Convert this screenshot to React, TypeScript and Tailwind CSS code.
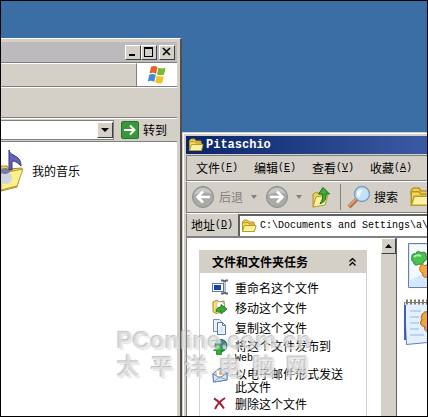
import type { ReactNode } from 'react';

const UI_FONT = "font-['Noto_Sans_CJK_SC',sans-serif]";
const MONO_FONT = "font-['Liberation_Mono',monospace]";

const MENUS = [
  { label: '文件', letter: 'F' },
  { label: '编辑', letter: 'E' },
  { label: '查看', letter: 'V' },
  { label: '收藏', letter: 'A' },
];

const TASKS = [
  { icon: <RenameIcon />, lines: ['重命名这个文件'] },
  { icon: <MoveIcon />, lines: ['移动这个文件'] },
  { icon: <CopyIcon />, lines: ['复制这个文件'] },
  { icon: <PublishIcon />, lines: ['将这个文件发布到', 'Web'] },
  { icon: <MailIcon />, lines: ['以电子邮件形式发送', '此文件'] },
  { icon: <DeleteIcon />, lines: ['删除这个文件'] },
];

function FolderIcon({ className }: { className: string }) {
  return (
    <svg className={className} viewBox="0 0 16 16" aria-hidden="true">
      <path d="M1.5 3.5 3 2h3.500l1.500 2H13v2.500H1.500Z" fill="#f0d050" stroke="#b8952a" />
      <path d="M1.500 13V4.500h5L8 6h5.500v7Z" fill="#f3d65a" stroke="#b8952a" />
      <path d="M1.500 13.500 3.500 7.500h11.500l-1.500 6Z" fill="#fdf3a0" stroke="#b99a2b" />
    </svg>
  );
}

function RenameIcon() {
  return (
    <svg className="h-4 w-4" viewBox="0 0 16 16" aria-hidden="true">
      <rect x=".5" y="4.500" width="11" height="8" fill="#fff" stroke="#5a7fb5" />
      <rect x="2" y="6" width="7" height="5" fill="#1643a8" />
      <path d="M9 1.500h2l1.500 1 1.500-1h2M12.500 2v12M9 14.500h2l1.500-1 1.500 1h2" fill="none" stroke="#5a6478" strokeWidth="2" />
      <path d="M12.500 3v10" stroke="#c6d0dd" />
    </svg>
  );
}

function MoveIcon() {
  return (
    <svg className="h-4 w-4" viewBox="0 0 16 16" aria-hidden="true">
      <path d="M1 3 5 1l2 2 5-1 1 10-9 2.500-3-2Z" fill="#f4df6c" stroke="#a38a28" />
      <path d="M5 3h5l2 2v6H5Z" fill="#fff" stroke="#b1b5bb" strokeWidth=".6" />
      <path d="M4 12.500c0-3 2-4.500 5-4.500V5.500l6 4.500-6 5v-2.500c-2 0-3.500-.5-5 0Z" fill="#39a936" stroke="#17661d" strokeWidth=".8" />
    </svg>
  );
}

function CopyIcon() {
  return (
    <svg className="h-4 w-4" viewBox="0 0 16 16" aria-hidden="true">
      <path d="M1.500.5h6l2 2v10h-8Z" fill="#e8f1fc" stroke="#7591b5" />
      <path d="M5.500 3.500h5l3 3v9h-8Z" fill="#f4f9ff" stroke="#59779f" />
      <path d="M10.500 3.500v3h3" fill="none" stroke="#59779f" />
      <path d="M7.500 9h4M7.500 11h4M7.500 13h4" fill="none" stroke="#b8cfec" />
    </svg>
  );
}

function PublishIcon() {
  return (
    <svg className="h-4 w-4" viewBox="0 0 16 16" aria-hidden="true">
      <circle cx="9" cy="6.500" r="6" fill="#3c7f9f" stroke="#28576f" />
      <path d="M5 2c3-2 5-1 4 2S5 6 4 8 3 4 5 2ZM11 5l3-1v4l-3 2Z" fill="#58b45c" />
      <path d="m7 6.500 5.500 5h-3v4h-5v-4h-3Z" fill="#27b332" stroke="#176d20" strokeWidth=".7" />
    </svg>
  );
}

function MailIcon() {
  return (
    <svg className="h-4 w-4" viewBox="0 0 16 16" aria-hidden="true">
      <path d="M1 6.500 8 1l7 5v7l-13.500 2Z" fill="#cbdcef" stroke="#6485ae" />
      <path d="m4 3 8 .5-.5 6-7 .5Z" fill="#fff" stroke="#98a3af" strokeWidth=".6" />
      <circle cx="9" cy="6" r="2" fill="#eda34e" />
      <path d="m1 6.500 6.500 4.500L15 6v7l-13.500 2Z" fill="#dceaf8" stroke="#6485ae" />
      <path d="m1.500 15 6-5 7.500 3" fill="none" stroke="#83a2c6" />
    </svg>
  );
}

function DeleteIcon() {
  return (
    <svg className="h-4 w-4" viewBox="0 0 16 16" aria-hidden="true">
      <path d="M2 3.500c4 2 7 5.500 10 10M13 3C9 5.500 5 9.500 3 14" fill="none" stroke="#a51c3b" strokeWidth="2" />
    </svg>
  );
}

function RoundArrow({ flip = false }: { flip?: boolean }) {
  return (
    <svg className="h-6 w-6 shrink-0" viewBox="0 0 24 24" aria-hidden="true">
      <circle cx="12" cy="12" r="10.500" fill="#a9a9a7" stroke="#8c8c8a" />
      <path d="M3 10a9.500 9.500 0 0 1 18-1c-5-2-12-2-18 1Z" fill="#c6c6c4" />
      <path
        d={flip ? 'M5 12h12M12 6.500l5.500 5.500-5.500 5.500' : 'M19 12H7M12 6.500 6.500 12l5.500 5.500'}
        fill="none"
        stroke="#fff"
        strokeWidth="2.600"
      />
    </svg>
  );
}

function UpFolderIcon() {
  return (
    <svg className="h-6 w-5 shrink-0" viewBox="0 0 20 24" aria-hidden="true">
      <path d="M2 9 6 7l2 2 6-1v11L2 22Z" fill="#ecd25a" stroke="#a98e2c" />
      <path d="m2 22 3-10 12-2-3 10Z" fill="#fbf2a0" stroke="#b59b35" />
      <path d="M12 2.500 18.500 9l-3.500-.2c.5 6-2 9-6 9.700 2.500-3 3-6 2.500-9.500L7.500 9Z" fill="#3bb035" stroke="#176b1b" />
    </svg>
  );
}

function SearchIcon() {
  return (
    <svg className="h-6 w-6 shrink-0" viewBox="0 0 24 24" aria-hidden="true">
      <path d="m10 14-8 8" stroke="#b9713e" strokeWidth="4" />
      <path d="m10 13-8 8" stroke="#e7ab7b" strokeWidth="1.500" />
      <circle cx="15" cy="9" r="7.500" fill="#c3e2f8" stroke="#7e9fc4" strokeWidth="1.500" />
      <path d="M10 9c0-3 3-5 6-4-2 1-3 4-3 7-2 0-3-1-3-3Z" fill="#f4fbff" />
    </svg>
  );
}

function WindowsFlag() {
  return (
    <svg className="h-5 w-5" viewBox="0 0 20 20" aria-hidden="true">
      <path d="M4 2c2-1.500 4-1.500 6.500 0L9 9C7 7.500 5 7.500 2.500 8.500Z" fill="#e8602c" />
      <path d="M11.500 2.500c2.500 1.500 4.500 1.200 7 .3L17 9.500c-2.500 1-4.500 1-7-.3Z" fill="#76b82e" />
      <path d="M2.300 9.800C4.500 8.600 6.500 8.800 8.800 10l-1.600 7C5 15.500 3 15.500.8 16.500Z" fill="#4389dc" />
      <path d="M9.800 10.500c2.400 1.300 4.500 1.300 7 .4L15.200 18c-2.500.9-4.500.6-7-.7Z" fill="#f4c321" />
    </svg>
  );
}

function MusicFolder() {
  return (
    <svg className="h-11 w-6 shrink-0" viewBox="0 0 24 44" aria-hidden="true">
      <path d="M0 17h6l2 3 13-1-5 19-16 4Z" fill="#eed65b" stroke="#a68b2a" />
      <path d="M0 24 12 22l10-2-6 17-16 4Z" fill="#fbf08a" stroke="#b59b35" />
      <ellipse cx="5" cy="29" rx="6" ry="6" fill="#cfd3e4" />
      <ellipse cx="4" cy="22" rx="5" ry="3" fill="#777ba8" />
      <path d="M8 1c1 4 3 4 6 6 4 2 6 5 6 10-3-3-5-5-9-5v9H8Z" fill="#6264b5" stroke="#343775" />
    </svg>
  );
}

function PictureFile() {
  return (
    <svg className="h-12 w-12 shrink-0" viewBox="0 0 48 48" aria-hidden="true">
      <path d="M6.500 1.500h40v44h-40Z" fill="#d6e8fd" stroke="#6c7fa8" />
      <path d="M8 3h38v16L8 38Z" fill="#f4faff" />
      <path d="M10 15c-1-3 3-4 4-3 0-3 4-3 5-1 3-2 6 0 5 3 2 2 0 5-2 5 0 3-3 4-5 3-2 2-6 1-5-2-2 0-3-3-2-5Z" fill="#4cc14c" stroke="#23802b" />
      <path d="M12 15c2-2 5-2 7-1" fill="none" stroke="#b0efaa" strokeWidth="2" />
      <path d="M18 25c1-3 3-3 5-1 2-3 6-2 6 1l3 10c-3 3-6 2-7 0-3 1-5-1-4-4-3 0-4-4-3-6Z" fill="#f6a93b" stroke="#b8711a" />
    </svg>
  );
}

function NotepadFile() {
  return (
    <svg className="h-12 w-12 shrink-0" viewBox="0 0 48 48" aria-hidden="true">
      <path d="M2.500 4.500h44v38l-42 4Z" fill="#e4f0fe" stroke="#5f7fb5" />
      <path d="M3 7v35" stroke="#3f63a6" strokeWidth="2" />
      <path d="M8 13h11M8 19h9M8 25h9M8 31h9M8 37h14" stroke="#8fb9e8" />
      <path d="M4 4h42" stroke="#8d7c58" strokeWidth="5" strokeDasharray="2 2" />
      <path d="M20 17c2-4 5-4 7-2l8 10-8 8c-4 1-5-2-4-4-4-1-6-4-3-7-1-2-1-3 0-5Z" fill="#f2a637" stroke="#8a5a17" />
    </svg>
  );
}

function CaptionButton({ label, className = '', children }: { label: string; className?: string; children: ReactNode }) {
  return (
    <button
      aria-label={label}
      className={`flex h-[15px] w-4 items-center justify-center border border-t-white border-r-[#404040] border-b-[#404040] border-l-white bg-[#d4d0c8] ${className}`}
    >
      <svg className="h-[10px] w-[10px]" viewBox="0 0 10 10" fill="none" stroke="#000" shapeRendering="crispEdges" aria-hidden="true">
        {children}
      </svg>
    </button>
  );
}

function MusicWindow() {
  return (
    <section className="absolute top-[37px] -bottom-4 left-0 flex w-[181px] flex-col border-t border-r-2 border-t-white border-r-[#505050] bg-[#d4d0c8] pt-[3px] pr-[3px]">
      <div className="flex h-5 items-center justify-end bg-[#bdbabd] pr-0.5">
        <CaptionButton label="最小化">
          <path d="M1 8h6" strokeWidth="2" />
        </CaptionButton>
        <CaptionButton label="最大化">
          <path d="M.5 1v8.500h8V1M0 1h9" />
          <path d="M0 1h9" strokeWidth="2" />
        </CaptionButton>
        <CaptionButton label="关闭" className="ml-0.5">
          <path d="m1 1 7 7M8 1 1 8" strokeWidth="1.600" shapeRendering="auto" />
        </CaptionButton>
      </div>
      <div className="flex h-[25px] border-t border-b border-t-[#808080] border-b-[#808080]">
        <div className="flex-1 border-t border-r border-t-white border-r-[#808080]" />
        <div className="flex w-10 items-center justify-center bg-white">
          <WindowsFlag />
        </div>
      </div>
      <div className="h-[31px] border-t border-b border-t-white border-b-[#808080]" />
      <div className="flex h-6 items-center border-t border-b border-t-white border-b-[#808080]">
        <div className="flex h-5 flex-1 items-center border border-l-0 border-[#808080] bg-white">
          <input aria-label="地址" className="h-full w-0 flex-1 outline-none" />
          <button aria-label="展开" className="flex h-4 w-4 items-center justify-center border border-t-white border-r-[#404040] border-b-[#404040] border-l-white bg-[#d4d0c8]">
            <svg className="h-1 w-2" viewBox="0 0 8 4" aria-hidden="true">
              <path d="M0 0h8L4 4Z" />
            </svg>
          </button>
        </div>
        <button className="ml-[7px] flex w-14 items-center gap-1 whitespace-nowrap">
          <svg className="h-[18px] w-[18px]" viewBox="0 0 18 18" aria-hidden="true">
            <rect x=".5" y=".5" width="17" height="17" rx="1.500" fill="#36983a" stroke="#25752a" />
            <path d="M3 9h10M9 4.500 13.500 9 9 13.500" fill="none" stroke="#fff" strokeWidth="2" />
          </svg>
          转到
        </button>
      </div>
      <div className="flex-1 bg-white pt-[7px]">
        <button className="flex items-center gap-[7px] text-left">
          <MusicFolder />
          我的音乐
        </button>
      </div>
    </section>
  );
}

function TaskPane() {
  return (
    <aside className="mt-3 mr-[14px] ml-3 flex-1 self-stretch border-x border-[#d4d0c8]">
      <button className="flex h-[23px] w-full items-center justify-between bg-[#d4d0c8] pr-[10px] pl-3 font-bold">
        文件和文件夹任务
        <svg className="h-2 w-[7px]" viewBox="0 0 7 8" fill="none" stroke="#000" strokeWidth="1.300" aria-hidden="true">
          <path d="m.5 3.500 3-3 3 3M.5 7.500l3-3 3 3" />
        </svg>
      </button>
      <ul className="pt-1 pl-3">
        {TASKS.map(({ icon, lines }) => (
          <li key={lines[0]}>
            <a href="#" className={`flex gap-[7px] leading-[13px] ${lines.length > 1 ? 'h-7 items-start pt-0.5' : 'h-5 items-center'}`}>
              <span className="shrink-0">{icon}</span>
              <span className="whitespace-nowrap">
                {lines.map((line) => (
                  <span key={line} className={`block h-[13px] ${line === 'Web' ? `${MONO_FONT} text-[10px]` : ''}`}>
                    {line}
                  </span>
                ))}
              </span>
            </a>
          </li>
        ))}
      </ul>
    </aside>
  );
}

function ExplorerWindow() {
  return (
    <section className="absolute top-[131px] right-0 -bottom-4 left-[181px] flex flex-col overflow-hidden border-t border-l border-[#d4d0c8] bg-[#d4d0c8]">
      <div className="flex min-h-0 flex-1 flex-col border-t border-l border-white pt-0.5 pl-0.5">
        <div className="flex h-[18px] shrink-0 items-center gap-0.5 bg-gradient-to-r from-[#0a246a] to-[#3a5ba4] pl-0.5">
          <FolderIcon className="h-4 w-4" />
          <h1 className={`${MONO_FONT} text-xs font-bold text-white`}>Pitaschio</h1>
        </div>
        <nav className="mt-px flex h-[26px] shrink-0 items-center gap-4 overflow-hidden border border-r-0 border-t-[#808080] border-b-[#808080] border-l-[#808080] pl-[9px]">
          {MENUS.map(({ label, letter }) => (
            <button key={letter} className="flex w-[42px] shrink-0 items-center whitespace-nowrap">
              {label}
              <span className={`${MONO_FONT} text-[10px]`}>
                (<u>{letter}</u>)
              </span>
            </button>
          ))}
        </nav>
        <div className="flex h-8 shrink-0 items-center overflow-hidden border-t border-b border-l border-t-white border-b-[#808080] border-l-[#808080] pl-1 text-[#808080]">
          <button className="flex shrink-0 items-center gap-1 whitespace-nowrap">
            <RoundArrow />
            后退
          </button>
          <svg className="mx-[7px] h-1 w-2 shrink-0" viewBox="0 0 8 4" aria-hidden="true">
            <path d="M1 0h6L4 4Z" fill="#808080" />
          </svg>
          <button aria-label="前进" className="shrink-0">
            <RoundArrow flip />
          </button>
          <svg className="ml-[6px] h-1 w-2 shrink-0" viewBox="0 0 8 4" aria-hidden="true">
            <path d="M1 0h6L4 4Z" fill="#808080" />
          </svg>
          <button aria-label="向上" className="ml-2 shrink-0">
            <UpFolderIcon />
          </button>
          <div className="mr-[6px] ml-[9px] h-[26px] border-l border-[#808080]" />
          <button className="flex shrink-0 items-center gap-[3px] whitespace-nowrap text-black">
            <SearchIcon />
            搜索
          </button>
          <button aria-label="文件夹" className="ml-[11px] shrink-0">
            <FolderIcon className="h-6 w-6" />
          </button>
        </div>
        <div className="flex h-6 shrink-0 items-center border-t border-b border-l border-t-white border-b-[#808080] border-l-[#808080] pl-1">
          <label htmlFor="address" className="flex w-[47px] shrink-0 items-center whitespace-nowrap">
            地址
            <span className={`${MONO_FONT} text-[10px]`}>
              (<u>D</u>)
            </span>
          </label>
          <div className="flex h-[22px] min-w-0 flex-1 items-center gap-[3px] border-t-2 border-l-2 border-[#606060] bg-white pl-px">
            <FolderIcon className="h-4 w-4 shrink-0" />
            <input
              id="address"
              defaultValue="C:\Documents and Settings\a\"
              className={`${MONO_FONT} w-0 flex-1 text-[10px] outline-none`}
            />
          </div>
        </div>
        <div className="flex min-h-0 flex-1 border-t border-l border-[#808080] bg-white">
          <TaskPane />
          <div className="flex w-4 shrink-0 flex-col border-r border-[#606060] bg-[#d4d0c8]">
            <button aria-label="向上滚动" className="flex h-4 items-center justify-center border border-t-white border-r-[#404040] border-b-[#404040] border-l-white">
              <svg className="h-1 w-[7px]" viewBox="0 0 7 4" aria-hidden="true">
                <path d="M3.500 0 7 4H0Z" />
              </svg>
            </button>
          </div>
          <div className="flex w-[30px] shrink-0 flex-col gap-2 overflow-hidden pt-1 pl-[5px]">
            <PictureFile />
            <NotepadFile />
          </div>
        </div>
      </div>
    </section>
  );
}

function Watermark() {
  return (
    <div className="pointer-events-none absolute top-[327px] left-[116px] w-[192px] font-bold text-white/50 [text-shadow:-1px_-1px_1px_#8888,1px_1px_1px_#ccc8]">
      <div className="font-['Liberation_Sans',sans-serif] text-2xl leading-[26px]">PConline.com.cn</div>
      <div className="flex justify-between text-[23px] leading-[22px]">
        {[...'太平洋电脑网'].map((char) => (
          <span key={char}>{char}</span>
        ))}
      </div>
    </div>
  );
}

export default function App() {
  return (
    <main className={`${UI_FONT} relative h-screen overflow-hidden border border-black bg-[#3a6ea5] text-xs text-black`}>
      <MusicWindow />
      <ExplorerWindow />
      <Watermark />
    </main>
  );
}
